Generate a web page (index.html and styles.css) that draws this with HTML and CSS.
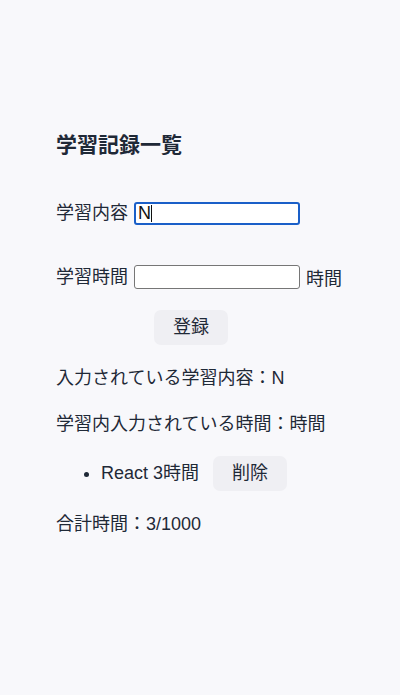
FILE: index.html
```html
<!DOCTYPE html>
<html lang="ja">
<head>
<meta charset="utf-8">
<title>学習記録一覧</title>
<link rel="stylesheet" href="styles.css">
</head>
<body>
<div class="app">
  <h3 class="title">学習記録一覧</h3>
  <div class="row row-first">
    <span class="label">学習内容</span>
    <span class="field-wrap">
      <input class="field field-focus" type="text" value="N">
      <span class="caret"></span>
    </span>
  </div>
  <div class="row row-second">
    <span class="label">学習時間</span>
    <input class="field" type="text" value="">
    <span class="unit">時間</span>
  </div>
  <button class="btn btn-register" type="button">登録</button>
  <p class="line line-first">入力されている学習内容：N</p>
  <p class="line">学習内入力されている時間：時間</p>
  <ul class="records">
    <li class="record"><span class="record-text">React 3時間</span><button class="btn btn-delete" type="button">削除</button></li>
  </ul>
  <p class="line">合計時間：3/1000</p>
</div>
</body>
</html>
```
FILE: styles.css
```css
html, body {
  margin: 0;
  padding: 0;
  background: #f8f8fb;
}
body {
  font-family: "Liberation Sans", "Noto Sans CJK JP", sans-serif;
  color: #1f2937;
  font-size: 18px;
}
.app {
  padding: 0 56px;
}
.title {
  margin: 130px 0 0;
  font-size: 21px;
  line-height: 30px;
  font-weight: 700;
}
.row {
  display: flex;
  align-items: center;
  height: 30px;
}
.row-first {
  margin-top: 38px;
}
.row-second {
  margin-top: 34px;
}
.label {
  margin-right: 6px;
  line-height: 30px;
}
.field-wrap {
  position: relative;
  display: flex;
}
.field {
  box-sizing: border-box;
  width: 166px;
  height: 24px;
  border: 1px solid #767676;
  border-radius: 3px;
  background: #fff;
  padding: 0 3px;
  font-family: "Liberation Sans", "Noto Sans CJK JP", sans-serif;
  font-size: 18px;
  color: #111;
  outline: none;
}
.field-focus {
  border: 2px solid #1a5fc8;
  height: 23px;
  padding: 0 2px;
}
.caret {
  position: absolute;
  left: 17px;
  top: 3px;
  width: 1px;
  height: 17px;
  background: #111;
}
.unit {
  margin-left: 6px;
}
.btn {
  display: inline-block;
  box-sizing: border-box;
  height: 35px;
  padding: 0 19px;
  border: none;
  border-radius: 7px;
  background: #efeff3;
  color: #1f2937;
  font-family: "Liberation Sans", "Noto Sans CJK JP", sans-serif;
  font-size: 18px;
  line-height: 35px;
}
.btn-register {
  display: block;
  margin: 18px 0 0 98px;
  width: 74px;
}
.line {
  margin: 18px 0 0;
  line-height: 28px;
}
.line-first {
  margin-top: 19px;
}
.records {
  margin: 18px 0 0;
  padding-left: 45px;
}
.record {
  line-height: 35px;
}
.record-text {
  margin-right: 14px;
}
.btn-delete {
  width: 74px;
  vertical-align: top;
}
.records + .line {
  margin-top: 19px;
}
```
